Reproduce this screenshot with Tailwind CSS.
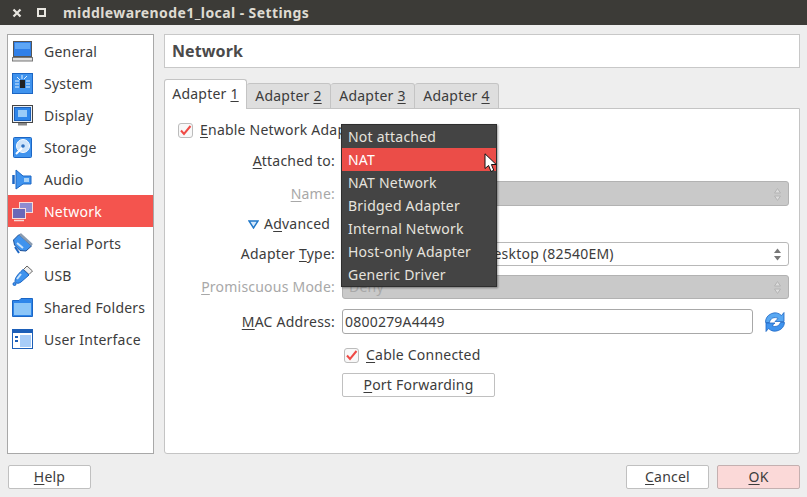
<!DOCTYPE html>
<html><head><meta charset="utf-8">
<script src="https://cdn.jsdelivr.net/npm/@tailwindcss/browser@4"></script>
</head>
<body class="m-0 bg-[#eeeeee]">
<div class="relative w-[807px] h-[497px] overflow-hidden bg-[#eeeeee] text-[#3c3c3c] text-[14px] leading-[20px] tracking-[0.22px] font-['Noto_Sans',sans-serif] flex flex-col">
  <!-- title bar -->
  <div class="h-[25px] bg-[#3c3b37] flex items-center pl-[12px] shrink-0">
    <svg width="10" height="10" viewBox="0 0 10 10" class="mr-[15px]"><path d="M1.5 1.5L8.5 8.5M8.5 1.5L1.5 8.5" stroke="#e8e6e0" stroke-width="2.2"/></svg>
    <div class="w-[9px] h-[9px] border-[2px] border-[#e8e6e0]"></div>
    <span class="ml-[17px] font-bold text-[#dfdbd2] tracking-[0.41px]">middlewarenode1_local - Settings</span>
  </div>
  <!-- main -->
  <div class="flex gap-[10px] pl-[7px] pr-[7px] pt-[9px] h-[429px] shrink-0">
    <div class="w-[147px] h-[420px] bg-white border border-[#a8a8a8] flex flex-col shrink-0">
      <div class="h-[32px] flex items-center pl-[4px] gap-[11px]">
        <svg width="21" height="21" viewBox="0 0 21 21" class="mt-[1px]"><rect x="1.5" y="0.5" width="18" height="15" fill="#2f7fe8" stroke="#555"/><rect x="3" y="2" width="15" height="6" fill="#5ea6f5"/><rect x="0.5" y="16.5" width="20" height="3.5" fill="#e0e0e0" stroke="#777"/></svg>
        <span class="pt-[2px]">General</span></div>
      <div class="h-[32px] flex items-center pl-[4px] gap-[11px]">
        <svg width="21" height="21" viewBox="0 0 21 21" class="mt-[1px]"><rect x="0.5" y="0.5" width="20" height="20" fill="#3f93ee" stroke="#1c66c4"/><rect x="8" y="7" width="5" height="8" fill="#222"/><path d="M3 8h4M3 11h4M3 14h4M14 8h4M14 11h4M14 14h4M10 2v4M15 3l-3 3M5 4l3 3" stroke="#dff0ff" stroke-width="1"/></svg>
        <span class="pt-[2px]">System</span></div>
      <div class="h-[32px] flex items-center pl-[4px] gap-[11px]">
        <svg width="21" height="21" viewBox="0 0 21 21" class="mt-[1px]"><rect x="0.5" y="0.5" width="20" height="17" fill="#e8eef5" stroke="#444"/><rect x="2.5" y="2.5" width="16" height="13" fill="#2e86ea" stroke="#1c5fb8"/><rect x="6" y="5" width="9" height="7" fill="#9accf8"/><rect x="6" y="18" width="9" height="2.5" fill="#888"/></svg>
        <span class="pt-[2px]">Display</span></div>
      <div class="h-[32px] flex items-center pl-[4px] gap-[11px]">
        <svg width="21" height="21" viewBox="0 0 21 21" class="mt-[1px]"><rect x="1.5" y="0.5" width="18" height="20" rx="1" fill="#3f93ee" stroke="#1c66c4"/><circle cx="11" cy="9" r="6.5" fill="#cfe4fa" stroke="#fff"/><circle cx="11" cy="9" r="1.8" fill="#2e6fc0"/><path d="M4 17L10 11" stroke="#fff" stroke-width="2"/></svg>
        <span class="pt-[2px]">Storage</span></div>
      <div class="h-[32px] flex items-center pl-[4px] gap-[11px]">
        <svg width="21" height="21" viewBox="0 0 21 21" class="mt-[1px]"><path d="M4 1L11 7H19V15H11L4 20Z" fill="#3f93ee" stroke="#1c66c4"/><path d="M12 9H17V13H12Z" fill="#a8d2f8"/><path d="M1.5 6V15" stroke="#1c66c4" stroke-width="2.5"/></svg>
        <span class="pt-[2px]">Audio</span></div>
      <div class="h-[32px] flex items-center pl-[4px] gap-[11px] bg-[#f4544e] text-white">
        <svg width="21" height="21" viewBox="0 0 21 21" class="mt-[1px]"><rect x="7.5" y="1.5" width="13" height="10" fill="#8d8cd0" stroke="#f8dcd8"/><rect x="0.5" y="7.5" width="13" height="10" fill="#6a68b8" stroke="#f8dcd8"/><path d="M2 19.5H12" stroke="#f8dcd8" stroke-width="1.5"/></svg>
        <span class="pt-[2px]">Network</span></div>
      <div class="h-[32px] flex items-center pl-[4px] gap-[11px]">
        <svg width="21" height="21" viewBox="0 0 21 21" class="mt-[1px]"><path d="M7 1.5L19.5 13L14 18L8 17.5L2.5 12L1.5 7Z" fill="#3f93ee" stroke="#1c4f96"/><path d="M8 1L20 12" stroke="#8a9bb0" stroke-width="2.5"/><path d="M5 10L11 15" stroke="#c9e3fb" stroke-width="2"/><path d="M3 14L7 20" stroke="#1c66c4" stroke-width="2"/></svg>
        <span class="pt-[2px]">Serial Ports</span></div>
      <div class="h-[32px] flex items-center pl-[4px] gap-[11px]">
        <svg width="21" height="21" viewBox="0 0 21 21" class="mt-[1px]"><path d="M15 1L20.5 6L17 9.5L11.5 4.5Z" fill="#eee" stroke="#666"/><path d="M11 4.5L17 10L9 17C6 19 4 18.5 3 16.5C3 13 5 10 11 4.5Z" fill="#3f93ee" stroke="#1c66c4"/><path d="M9 9L5 14" stroke="#c9e3fb" stroke-width="2"/><circle cx="2.5" cy="19" r="1.5" fill="#3f93ee" stroke="#1c66c4"/></svg>
        <span class="pt-[2px]">USB</span></div>
      <div class="h-[32px] flex items-center pl-[4px] gap-[11px]">
        <svg width="21" height="21" viewBox="0 0 21 21" class="mt-[1px]"><path d="M0.5 3.5H7L9 1.5H20.5V19.5H0.5Z" fill="#2e86ea" stroke="#1c66c4"/><path d="M2 6H19V18H2Z" fill="#8cc6f8"/></svg>
        <span class="pt-[2px]">Shared Folders</span></div>
      <div class="h-[32px] flex items-center pl-[4px] gap-[11px]">
        <svg width="21" height="21" viewBox="0 0 21 21" class="mt-[1px]"><rect x="0.5" y="0.5" width="20" height="19" fill="#fff" stroke="#1c5fb8"/><rect x="1" y="1" width="19" height="3" fill="#1c5fb8"/><rect x="8" y="6" width="11" height="12" fill="#a8cdf8"/><rect x="3" y="7" width="3" height="2" fill="#1c5fb8"/><rect x="3" y="11" width="3" height="2" fill="#1c5fb8"/></svg>
        <span class="pt-[2px]">User Interface</span></div>
    </div>
    <div class="w-[636px] flex flex-col shrink-0">
      <div class="h-[34px] bg-white border border-[#c8c8c8] flex items-center pl-[7px] text-[16px] font-bold text-[#4a4a4a] tracking-[0.1px] shrink-0">Network</div>
      <div class="flex h-[30px] mt-[11px] items-end shrink-0 relative z-10 -mb-[1px]">
        <div class="h-[30px] w-[83px] bg-white border border-[#c4c4c4] border-b-0 rounded-t-[3px] flex items-center justify-center pb-[2px]"><span>Adapter <span class="underline underline-offset-2">1</span></span></div>
        <div class="h-[26px] w-[84px] bg-[#dedede] border border-l-0 border-[#c4c4c4] rounded-t-[3px] flex items-center justify-center"><span>Adapter <span class="underline underline-offset-2">2</span></span></div>
        <div class="h-[26px] w-[84px] bg-[#dedede] border border-l-0 border-[#c4c4c4] rounded-t-[3px] flex items-center justify-center"><span>Adapter <span class="underline underline-offset-2">3</span></span></div>
        <div class="h-[26px] w-[84px] bg-[#dedede] border border-l-0 border-[#c4c4c4] rounded-t-[3px] flex items-center justify-center"><span>Adapter <span class="underline underline-offset-2">4</span></span></div>
      </div>
      <div class="h-[346px] bg-white border border-[#c4c4c4] rounded-b-[3px] pt-[11px] flex flex-col shrink-0">
        <div class="h-[20px] flex items-center pl-[13px] gap-[7px]">
          <span class="w-[15px] h-[15px] border border-[#bcbcbc] rounded-[3px] bg-[#f8f8f8] flex items-center justify-center"><svg width="13" height="13" viewBox="0 0 13 13"><path d="M2 6.5L5 10L11.5 2" fill="none" stroke="#ef4a45" stroke-width="2"/></svg></span>
          <span><span class="underline underline-offset-2">E</span>nable Network Adapter</span>
        </div>
        <div class="grid grid-cols-[170px_1fr] gap-x-[7px] mt-[11px] items-center">
          <div class="h-[20px] text-right"><span class="underline underline-offset-2">A</span>ttached to:</div>
          <div class="h-[20px]"></div>
          <div class="h-[25px] mt-[10px] text-right text-[#a8a8a8] leading-[25px]"><span class="underline underline-offset-2">N</span>ame:</div>
          <div class="h-[25px] mt-[10px] w-[447px] bg-[#c9c9c9] border border-[#b2b2b2] rounded-[3px] flex justify-end items-center pr-[6px]">
            <svg width="9" height="16" viewBox="0 0 9 16"><path d="M4.5 2.5L7.5 7H1.5Z" fill="#dcdcdc" stroke="#b4b4b4"/><path d="M1.5 10H7.5L4.5 14.5Z" fill="#dcdcdc" stroke="#b4b4b4"/></svg>
          </div>
          <div class="h-[20px] mt-[8px] col-span-2 flex items-center pl-[83px]">
            <svg width="11" height="9" viewBox="0 0 11 9" class="mr-[5px]"><path d="M1 1H10L5.5 8Z" fill="#d5e8fb" stroke="#1f77c8" stroke-width="1.4"/></svg>
            <span>A<span class="underline underline-offset-2">d</span>vanced</span>
          </div>
          <div class="h-[24px] mt-[8px] text-right leading-[24px]">Adapter <span class="underline underline-offset-2">T</span>ype:</div>
          <div class="h-[24px] mt-[8px] w-[447px] bg-white border border-[#b8b8b8] rounded-[3px] flex items-center justify-between pr-[6px] pl-[140px]">
            <span>Desktop (82540EM)</span>
            <svg width="9" height="16" viewBox="0 0 9 16"><path d="M4.5 2.5L8 7H1Z" fill="#777"/><path d="M1 10H8L4.5 14.5Z" fill="#777"/></svg>
          </div>
          <div class="h-[24px] mt-[9px] text-right text-[#a8a8a8] leading-[24px]"><span class="underline underline-offset-2">P</span>romiscuous Mode:</div>
          <div class="h-[24px] mt-[9px] w-[447px] bg-[#c9c9c9] border border-[#b2b2b2] rounded-[3px] flex items-center justify-between pr-[6px] pl-[6px] text-[#a8a8a8]">
            <span>Deny</span>
            <svg width="9" height="16" viewBox="0 0 9 16"><path d="M4.5 2.5L7.5 7H1.5Z" fill="#dcdcdc" stroke="#b4b4b4"/><path d="M1.5 10H7.5L4.5 14.5Z" fill="#dcdcdc" stroke="#b4b4b4"/></svg>
          </div>
          <div class="h-[25px] mt-[10px] text-right leading-[25px]"><span class="underline underline-offset-2">M</span>AC Address:</div>
          <div class="h-[25px] mt-[10px] flex items-center">
            <div class="h-[25px] w-[411px] bg-white border border-[#a8a8a8] rounded-[3px] flex items-center pl-[2px]">0800279A4449</div>
            <svg width="22" height="24" viewBox="0 0 22 24" class="ml-[11px]"><path d="M1.5 12.5A9.5 9.5 0 0 1 17.5 5.5L20 2.5V11.5H11L14 8.5A5.5 5.5 0 0 0 5.5 12.5Z" fill="#59a8f2" stroke="#1c66c4" stroke-width="0.8"/><path d="M20.5 12.5A9.5 9.5 0 0 1 4.5 18.5L2 21.5V13H11L8 15.5A5.5 5.5 0 0 0 16.5 12.5Z" fill="#3f93ee" stroke="#1c66c4" stroke-width="0.8"/></svg>
          </div>
          <div class="col-start-2 h-[20px] mt-[11px] flex items-center gap-[7px] pl-[2px]">
            <span class="w-[15px] h-[15px] border border-[#bcbcbc] rounded-[3px] bg-[#f8f8f8] flex items-center justify-center"><svg width="13" height="13" viewBox="0 0 13 13"><path d="M2 6.5L5 10L11.5 2" fill="none" stroke="#ef4a45" stroke-width="2"/></svg></span>
            <span><span class="underline underline-offset-2">C</span>able Connected</span>
          </div>
          <div class="col-start-2 mt-[8px] w-[153px] h-[24px] bg-white border border-[#c0c0c0] rounded-[2px] flex items-center justify-center"><span><span class="underline underline-offset-2">P</span>ort Forwarding</span></div>
        </div>
      </div>
    </div>
  </div>
  <!-- buttons -->
  <div class="flex pl-[8px] pr-[7px] pt-[11px] shrink-0">
    <div class="w-[83px] h-[24px] bg-white border border-[#c0c0c0] rounded-[2px] flex items-center justify-center"><span><span class="underline underline-offset-2">H</span>elp</span></div>
    <div class="ml-auto w-[83px] h-[24px] bg-white border border-[#c0c0c0] rounded-[2px] flex items-center justify-center"><span><span class="underline underline-offset-2">C</span>ancel</span></div>
    <div class="ml-[8px] w-[83px] h-[24px] bg-[#fbd9d8] border border-[#c4b0b0] rounded-[2px] flex items-center justify-center"><span><span class="underline underline-offset-2">O</span>K</span></div>
  </div>
  <!-- popup menu -->
  <div class="absolute left-[341px] top-[124px] w-[156px] h-[163px] bg-[#444444] border border-[#2e2e2e] shadow-[1px_1px_2px_rgba(0,0,0,0.4)] text-[#e6e3de] z-20">
    <div class="h-[23px] pl-[6px] leading-[23px]">Not attached</div>
    <div class="h-[23px] pl-[6px] leading-[23px] bg-[#eb4d48] text-white">NAT</div>
    <div class="h-[23px] pl-[6px] leading-[23px]">NAT Network</div>
    <div class="h-[23px] pl-[6px] leading-[23px]">Bridged Adapter</div>
    <div class="h-[23px] pl-[6px] leading-[23px]">Internal Network</div>
    <div class="h-[23px] pl-[6px] leading-[23px]">Host-only Adapter</div>
    <div class="h-[23px] pl-[6px] leading-[23px]">Generic Driver</div>
  </div>
  <!-- pointer -->
  <svg class="absolute left-[484px] top-[153px] z-30" width="14" height="20" viewBox="0 0 14 20"><path d="M1 0.8V15.5L4.6 12.5L7 18.5L9.8 17.3L7.4 11.5H12.2Z" fill="#fff" stroke="#111" stroke-width="1"/></svg>
</div>
</body></html>
